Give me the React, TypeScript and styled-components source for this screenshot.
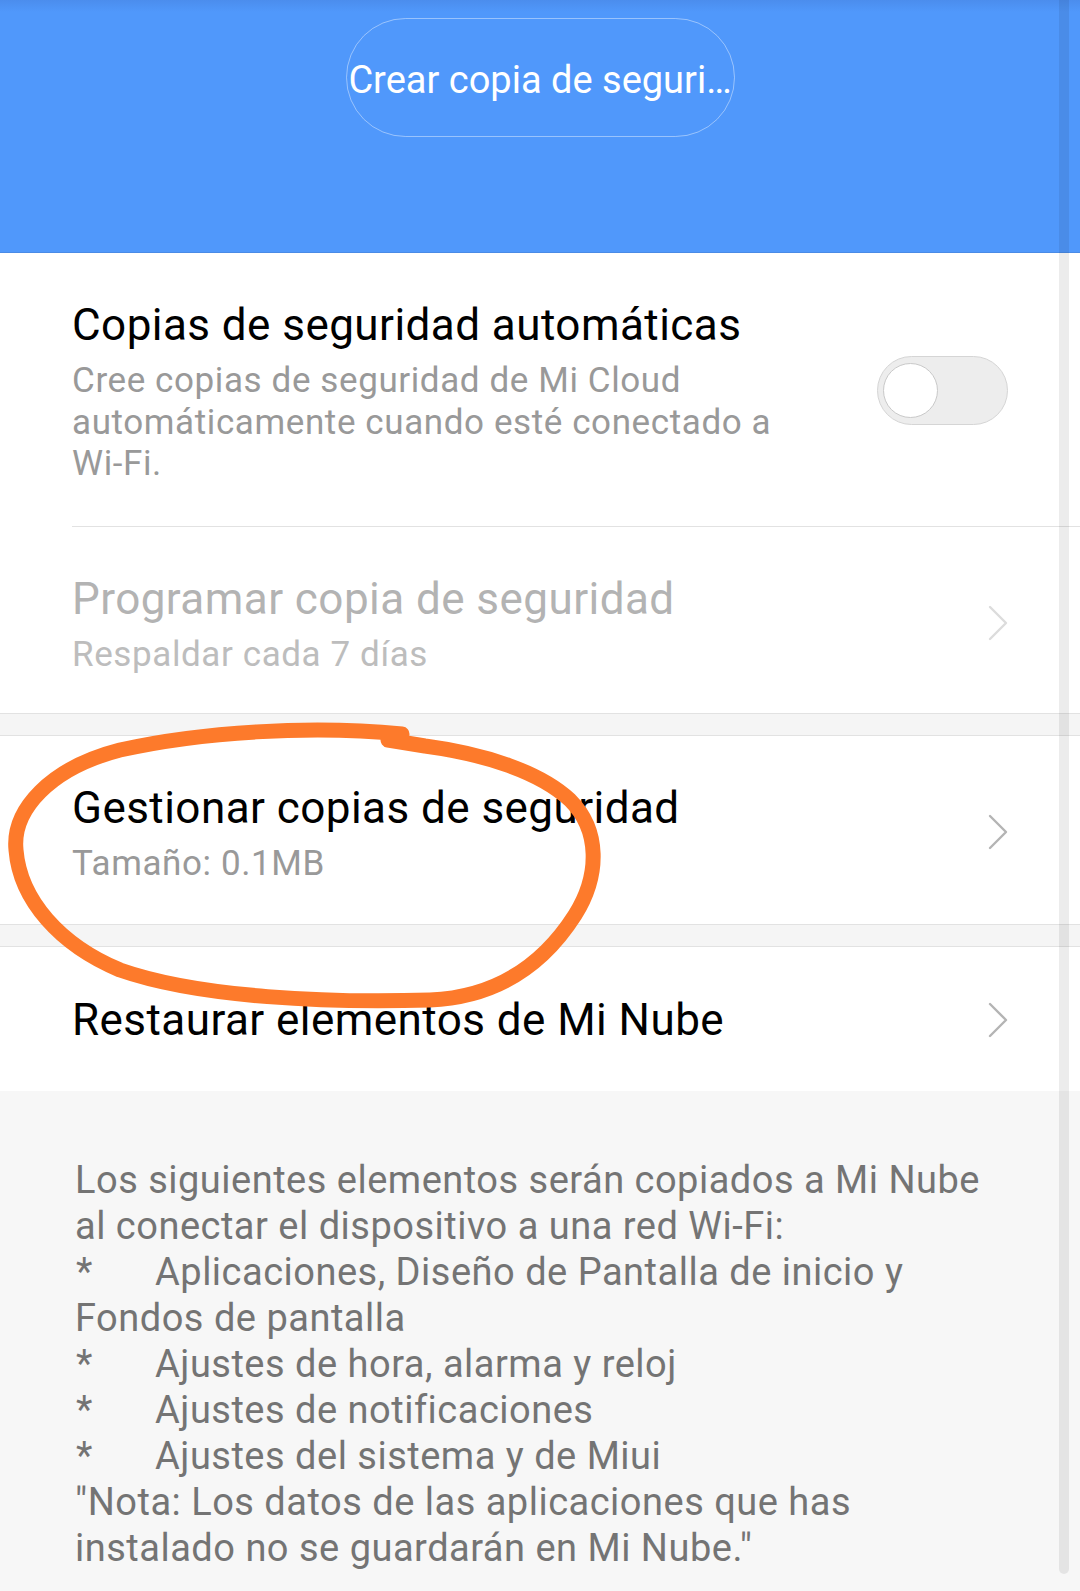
import React from "react";
import styled, { createGlobalStyle } from "styled-components";

const GlobalStyle = createGlobalStyle`
  html, body {
    margin: 0;
    padding: 0;
    background: #f7f7f7;
  }
  body {
    font-family: Roboto, "Noto Sans", "Liberation Sans", sans-serif;
    -webkit-font-smoothing: antialiased;
  }
`;

const Page = styled.div`
  position: relative;
  width: 1080px;
  height: 1591px;
  overflow: hidden;
  background: #f7f7f7;
`;

const Header = styled.header`
  height: 253px;
  box-sizing: border-box;
  display: flex;
  justify-content: center;
  align-items: flex-start;
  padding-top: 18px;
  background: linear-gradient(#4b8ded 0px, #5098fb 12px, #5098fb 100%);
  border-bottom: 1px solid #4a8be6;
`;

const PillButton = styled.button`
  width: 389px;
  height: 119px;
  box-sizing: border-box;
  padding: 4px 0 0 0;
  border: 1px solid rgba(255, 255, 255, 0.42);
  border-radius: 60px;
  background: transparent;
  color: #ffffff;
  font-family: Roboto, "Liberation Sans", sans-serif;
  font-size: 38px;
  white-space: nowrap;
  display: flex;
  align-items: center;
  justify-content: center;
`;

const Section = styled.section`
  background: #ffffff;
`;

const SectionGap = styled.div`
  height: 21px;
  background: #f5f5f5;
  border-top: 1px solid #e2e2e2;
  border-bottom: 1px solid #e2e2e2;
`;

const Row = styled.div<{ $pt: number; $pb: number }>`
  display: flex;
  align-items: center;
  gap: 24px;
  padding: ${(p) => p.$pt}px 72px ${(p) => p.$pb}px 72px;
`;

const RowText = styled.div`
  flex: 1;
  min-width: 0;
`;

const Title = styled.div<{ $disabled?: boolean }>`
  font-size: 44px;
  letter-spacing: 0.45px;
  line-height: 56px;
  color: ${(p) => (p.$disabled ? "#b3b3b3" : "#000000")};
  white-space: nowrap;
`;

const Subtitle = styled.div<{ $disabled?: boolean }>`
  margin-top: 7px;
  font-size: 35px;
  letter-spacing: 0.6px;
  line-height: 41.5px;
  color: ${(p) => (p.$disabled ? "#bdbdbd" : "#999999")};
  white-space: nowrap;
`;

const Divider = styled.div`
  margin-left: 72px;
  height: 1px;
  background: #e2e2e2;
`;

const Toggle = styled.div`
  flex: none;
  width: 131px;
  height: 69px;
  box-sizing: border-box;
  border-radius: 35px;
  background: #ededed;
  border: 1px solid #d5d5d5;
  display: flex;
  align-items: center;
  padding-left: 5px;
`;

const Knob = styled.div`
  width: 55px;
  height: 55px;
  box-sizing: border-box;
  border-radius: 50%;
  background: #ffffff;
  border: 1px solid #c9c9c9;
`;

const ChevronBox = styled.svg`
  flex: none;
  width: 20px;
  height: 36px;
`;

const Footer = styled.div`
  padding: 66px 60px 0 75px;
  font-size: 38px;
  letter-spacing: 0.5px;
  line-height: 46px;
  color: #747474;
  white-space: nowrap;
`;

const Bullet = styled.span`
  display: inline-block;
  width: 80px;
  padding-left: 1px;
  box-sizing: border-box;
`;

const ScrollThumb = styled.div`
  position: absolute;
  top: 0;
  right: 11px;
  width: 10px;
  height: 1574px;
  border-radius: 0 0 5px 5px;
  background: rgba(0, 0, 0, 0.075);
  pointer-events: none;
`;

const Annotation = styled.svg`
  position: absolute;
  left: 0;
  top: 0;
  width: 1080px;
  height: 1591px;
  pointer-events: none;
`;

function Chevron({ light }: { light?: boolean }) {
  return (
    <ChevronBox viewBox="0 0 20 36">
      <polyline
        points="2,2 18,18 2,34"
        fill="none"
        stroke={light ? "#dcdcdc" : "#b4b4b4"}
        strokeWidth={2.4}
        strokeLinecap="round"
        strokeLinejoin="round"
      />
    </ChevronBox>
  );
}

export default function App() {
  return (
    <Page>
      <GlobalStyle />
      <Header>
        <PillButton>Crear copia de seguri…</PillButton>
      </Header>

      <Section>
        <Row $pt={44} $pb={41.5}>
          <RowText>
            <Title>Copias de seguridad automáticas</Title>
            <Subtitle>
              Cree copias de seguridad de Mi Cloud
              <br />
              automáticamente cuando esté conectado a
              <br />
              Wi-Fi.
            </Subtitle>
          </RowText>
          <Toggle>
            <Knob />
          </Toggle>
        </Row>
        <Divider />
        <Row $pt={44} $pb={37.5}>
          <RowText>
            <Title $disabled>Programar copia de seguridad</Title>
            <Subtitle $disabled>Respaldar cada 7 días</Subtitle>
          </RowText>
          <Chevron light />
        </Row>
      </Section>

      <SectionGap />

      <Section>
        <Row $pt={44} $pb={39.5}>
          <RowText>
            <Title>Gestionar copias de seguridad</Title>
            <Subtitle>Tamaño: 0.1MB</Subtitle>
          </RowText>
          <Chevron />
        </Row>
      </Section>

      <SectionGap />

      <Section>
        <Row $pt={45} $pb={43}>
          <RowText>
            <Title>Restaurar elementos de Mi Nube</Title>
          </RowText>
          <Chevron />
        </Row>
      </Section>

      <Footer>
        Los siguientes elementos serán copiados a Mi Nube
        <br />
        al conectar el dispositivo a una red Wi-Fi:
        <br />
        <Bullet>*</Bullet>Aplicaciones, Diseño de Pantalla de inicio y
        <br />
        Fondos de pantalla
        <br />
        <Bullet>*</Bullet>Ajustes de hora, alarma y reloj
        <br />
        <Bullet>*</Bullet>Ajustes de notificaciones
        <br />
        <Bullet>*</Bullet>Ajustes del sistema y de Miui
        <br />
        "Nota: Los datos de las aplicaciones que has
        <br />
        instalado no se guardarán en Mi Nube."
      </Footer>

      <ScrollThumb />

      <Annotation viewBox="0 0 1080 1591">
        <path
          d="M 402 734 C 310 725, 200 732, 120 750 C 50 768, 12 810, 16 850 C 20 900, 60 945, 120 970 C 200 998, 330 1003, 430 1000 C 500 997, 545 962, 575 915 C 600 875, 600 830, 570 800 C 540 772, 485 754, 425 746 L 388 740"
          fill="none"
          stroke="#fd7a2b"
          strokeWidth={15}
          strokeLinecap="round"
          strokeLinejoin="round"
        />
      </Annotation>
    </Page>
  );
}
